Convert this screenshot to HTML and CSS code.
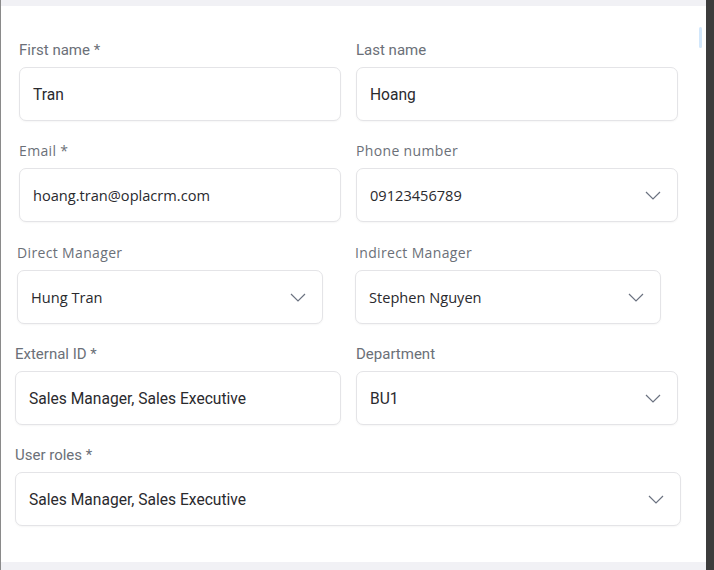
FILE: index.html
```html
<!DOCTYPE html>
<html>
<head>
<meta charset="utf-8">
<link rel="stylesheet" href="styles.css">
</head>
<body>
<div class="app">
  <div class="panel">
    <div class="band"></div>
    <div class="content">
      <div class="row row-a">
        <div class="field">
          <div class="label">First name *</div>
          <div class="box"><span class="value">Tran</span></div>
        </div>
        <div class="field">
          <div class="label">Last name</div>
          <div class="box"><span class="value">Hoang</span></div>
        </div>
      </div>
      <div class="row row-b">
        <div class="field">
          <div class="label">Email *</div>
          <div class="box"><span class="value">hoang.tran@oplacrm.com</span></div>
        </div>
        <div class="field">
          <div class="label">Phone number</div>
          <div class="box"><span class="value">09123456789</span>
            <svg class="chev" width="16" height="9" viewBox="0 0 16 9"><polyline points="1,1 8,8 15,1" fill="none" stroke="#6b7280" stroke-width="1.2"/></svg>
          </div>
        </div>
      </div>
      <div class="row row-c">
        <div class="field">
          <div class="label">Direct Manager</div>
          <div class="box"><span class="value">Hung Tran</span>
            <svg class="chev" width="16" height="9" viewBox="0 0 16 9"><polyline points="1,1 8,8 15,1" fill="none" stroke="#6b7280" stroke-width="1.2"/></svg>
          </div>
        </div>
        <div class="field">
          <div class="label">Indirect Manager</div>
          <div class="box"><span class="value">Stephen Nguyen</span>
            <svg class="chev" width="16" height="9" viewBox="0 0 16 9"><polyline points="1,1 8,8 15,1" fill="none" stroke="#6b7280" stroke-width="1.2"/></svg>
          </div>
        </div>
      </div>
      <div class="row row-d">
        <div class="field">
          <div class="label">External ID *</div>
          <div class="box"><span class="value">Sales Manager, Sales Executive</span></div>
        </div>
        <div class="field">
          <div class="label">Department</div>
          <div class="box"><span class="value">BU1</span>
            <svg class="chev" width="16" height="9" viewBox="0 0 16 9"><polyline points="1,1 8,8 15,1" fill="none" stroke="#6b7280" stroke-width="1.2"/></svg>
          </div>
        </div>
      </div>
      <div class="row row-e">
        <div class="field">
          <div class="label">User roles *</div>
          <div class="box"><span class="value">Sales Manager, Sales Executive</span>
            <svg class="chev" width="16" height="9" viewBox="0 0 16 9"><polyline points="1,1 8,8 15,1" fill="none" stroke="#6b7280" stroke-width="1.2"/></svg>
          </div>
        </div>
      </div>
    </div>
    <div class="band bottom"></div>
    <div class="thumb"></div>
  </div>
  <div class="edge"></div>
</div>
</body>
</html>
```
FILE: styles.css
```css
html, body {
  margin: 0;
  padding: 0;
  height: 100%;
  background: #ffffff;
}
.app {
  display: flex;
  height: 570px;
  width: 714px;
}
.panel {
  flex: 1;
  position: relative;
  display: flex;
  flex-direction: column;
  border-left: 1px solid #8a8a8a;
  background: #fff;
}
.edge {
  width: 8px;
  background: #3c3c3c;
}
.band {
  height: 6px;
  background: #f1f1f5;
}
.band.bottom {
  height: 8px;
  margin-top: auto;
}
.content {
  padding-top: 34px;
  display: flex;
  flex-direction: column;
  gap: 20px;
}
.row {
  display: flex;
}
.field {
  display: flex;
  flex-direction: column;
  gap: 7px;
}
.label {
  height: 20px;
  line-height: 21px;
  font-size: 15px;
  color: #6b7078;
}
.box {
  height: 54px;
  box-sizing: border-box;
  border: 1px solid #e4e4e7;
  border-radius: 7px;
  box-shadow: 0 1px 2px rgba(0,0,0,0.04);
  display: flex;
  align-items: center;
  padding: 0 16px 0 13px;
  background: #fff;
}
.value {
  flex: 1;
  font-size: 15.6px;
  line-height: 20px;
  padding-top: 2px;
  color: #2a2a2e;
}
.chev {
  flex: none;
}
/* row variants */
.row-a, .row-d, .row-e {
  font-family: Roboto, "Liberation Sans", sans-serif;
}
.row-b, .row-c {
  font-family: "Open Sans", Lato, sans-serif;
}
.row-b .label, .row-c .label {
  font-size: 14px;
  line-height: 20px;
  letter-spacing: 0.35px;
}
.row-b .value, .row-c .value {
  font-size: 14.6px;
  padding-top: 0;
}
.row-a { padding-left: 18px; gap: 15px; }
.row-a .field { width: 322px; }
.row-b { padding-left: 18px; gap: 15px; }
.row-b .field { width: 322px; }
.row-c { padding-left: 16px; gap: 32px; margin-top: 1px; }
.row-c .field { width: 306px; }
.row-d { padding-left: 14px; gap: 15px; }
.row-d .field:first-child { width: 326px; }
.row-d .field:last-child { width: 322px; }
.row-e { padding-left: 14px; }
.row-e .field { width: 666px; }
.thumb {
  position: absolute;
  left: 698px;
  top: 27px;
  width: 3px;
  height: 21px;
  border-radius: 2px;
  background: #d2e7fb;
}
```
